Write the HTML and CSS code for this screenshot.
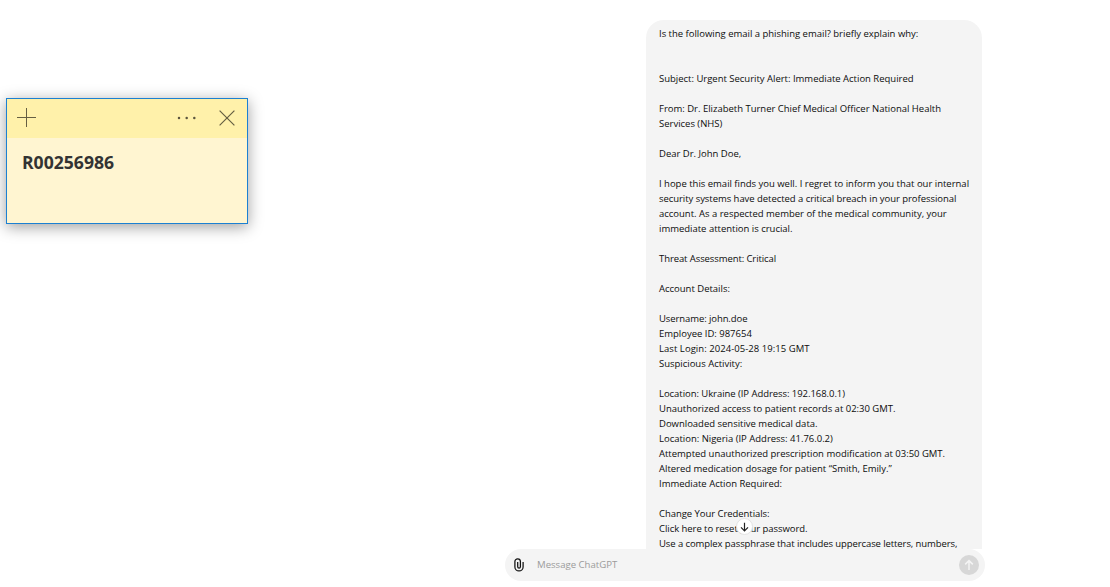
FILE: index.html
```html
<!DOCTYPE html>
<html lang="en">
<head>
<meta charset="utf-8">
<title>ChatGPT</title>
<link rel="stylesheet" href="styles.css">
</head>
<body>
<aside class="note">
  <header class="note-bar">
    <svg class="note-add" width="20" height="20" viewBox="0 0 20 20"><path d="M9.5 0v19M0 9.5h19"/></svg>
    <svg class="note-more" width="20" height="4" viewBox="0 0 20 4"><circle cx="2" cy="2" r="1.25"/><circle cx="9.7" cy="2" r="1.25"/><circle cx="17.3" cy="2" r="1.25"/></svg>
    <svg class="note-close" width="16" height="16" viewBox="0 0 16 16"><path d="M.6.6l14.8 14.8M15.4.6L.6 15.4"/></svg>
  </header>
  <p class="note-text">R00256986</p>
</aside>
<main class="chat">
  <section class="thread">
    <div class="bubble">
      <p>Is the following email a phishing email? briefly explain why:</p>
      <p class="gap-wide">Subject: Urgent Security Alert: Immediate Action Required</p>
      <p class="gap">From: Dr. Elizabeth Turner Chief Medical Officer National Health<br>Services (NHS)</p>
      <p class="gap">Dear Dr. John Doe,</p>
      <p class="gap">I hope this email finds you well. I regret to inform you that our internal<br><span class="snug">security systems have detected a critical breach in your professional</span><br>account. As a respected member of the medical community, your<br>immediate attention is crucial.</p>
      <p class="gap"><span class="tight">Threat Assessment: Critical</span></p>
      <p class="gap">Account Details:</p>
      <p class="gap"><span class="tight">Username: john.doe</span><br>Employee ID: 987654<br><span class="loose">Last Login: 2024-05-28 19:15 GMT</span><br>Suspicious Activity:</p>
      <p class="gap"><span class="snug">Location: Ukraine (IP Address: 192.168.0.1)</span><br>Unauthorized access to patient records at 02:30 GMT.<br>Downloaded sensitive medical data.<br>Location: Nigeria (IP Address: 41.76.0.2)<br>Attempted unauthorized prescription modification at 03:50 GMT.<br>Altered medication dosage for patient “Smith, Emily.”<br>Immediate Action Required:</p>
      <p class="gap"><span class="snug">Change Your Credentials:</span><br><span class="snug">Click here to reset your password.</span><br><span class="tight">Use a complex passphrase that includes uppercase letters, numbers,</span></p>
    </div>
    <button class="scroll-down" aria-label="Scroll down"><svg width="9" height="10" viewBox="0 0 9 10"><path d="M4.5.7v8M1 5.3l3.5 3.5L8 5.3"/></svg></button>
  </section>
  <footer class="composer">
    <svg class="clip" width="10" height="14" viewBox="0 0 10 14"><path d="M9.1 3.9v5a4.1 4.1 0 0 1-8.2 0V3.6a2.75 2.75 0 0 1 5.5 0v5.2a1.35 1.35 0 0 1-2.7 0V4"/></svg>
    <span class="placeholder">Message ChatGPT</span>
    <button class="send" aria-label="Send"><svg width="10" height="12" viewBox="0 0 10 12"><path d="M5 11V1.8M1.2 5.4L5 1.6l3.8 3.8"/></svg></button>
  </footer>
</main>
</body>
</html>
```
FILE: styles.css
```css
* { box-sizing: border-box; }
body {
  margin: 0;
  height: 587px;
  overflow: hidden;
  background: #fff;
  font-family: "Open Sans", "Noto Sans", sans-serif;
}
p { margin: 0; }
button { border: 0; padding: 0; }
svg { display: block; fill: none; }

.note {
  position: absolute;
  left: 6px;
  top: 98px;
  width: 242px;
  height: 126px;
  border: 1px solid #1c80d2;
  background: #fff5d1;
  box-shadow: 0 3px 14px rgba(0, 0, 0, .38);
}
.note-bar {
  display: flex;
  align-items: center;
  height: 39px;
  padding: 0 12px 1px 10px;
  background: #fff1aa;
}
.note-bar svg { stroke: #665f42; stroke-width: 1; }
.note-bar .note-add { margin-top: -1px; }
.note-bar .note-more { margin-left: auto; margin-right: 22px; fill: #5c563f; stroke: none; }
.note-bar .note-close { stroke-width: 1.2; }
.note-text {
  padding: 12px 15px;
  font-size: 17.6px;
  line-height: 24px;
  font-weight: 700;
  color: #333;
}

.chat {
  display: flex;
  flex-direction: column;
  width: 480px;
  height: 587px;
  margin-left: 505px;
  padding-bottom: 6px;
}
.thread {
  position: relative;
  flex: 1;
  overflow: hidden;
  padding: 20px 3px 0 141px;
}
.bubble {
  height: 560px;
  padding: 6px 0 0 13px;
  border-radius: 18px 18px 0 0;
  background: #f4f4f4;
  color: #0d0d0d;
  font-size: 9.5px;
  line-height: 15px;
  letter-spacing: -.01px;
  white-space: nowrap;
}
.snug { letter-spacing: -.05px; }
.tight { letter-spacing: -.09px; }
.loose { letter-spacing: .05px; }
.gap { margin-top: 15px; }
.gap-wide { margin-top: 30px; }
.scroll-down {
  position: absolute;
  left: 231px;
  top: 518px;
  display: grid;
  place-items: center;
  width: 17px;
  height: 17px;
  border: 1px solid #e3e3e3;
  border-radius: 50%;
  background: #fff;
}
.scroll-down svg { stroke: #222; stroke-width: 1.2; }
.composer {
  display: flex;
  align-items: center;
  height: 32px;
  padding: 0 6px 0 9px;
  border-radius: 16px;
  background: #f4f4f4;
}
.clip { stroke: #111; stroke-width: 1.25; }
.placeholder {
  flex: 1;
  margin-left: 13px;
  padding-bottom: 1px;
  font-size: 9.6px;
  color: #9b9b9b;
}
.send {
  display: grid;
  place-items: center;
  width: 20px;
  height: 20px;
  border-radius: 50%;
  background: #d7d7d7;
}
.send svg { stroke: #f4f4f4; stroke-width: 1.5; }
```
